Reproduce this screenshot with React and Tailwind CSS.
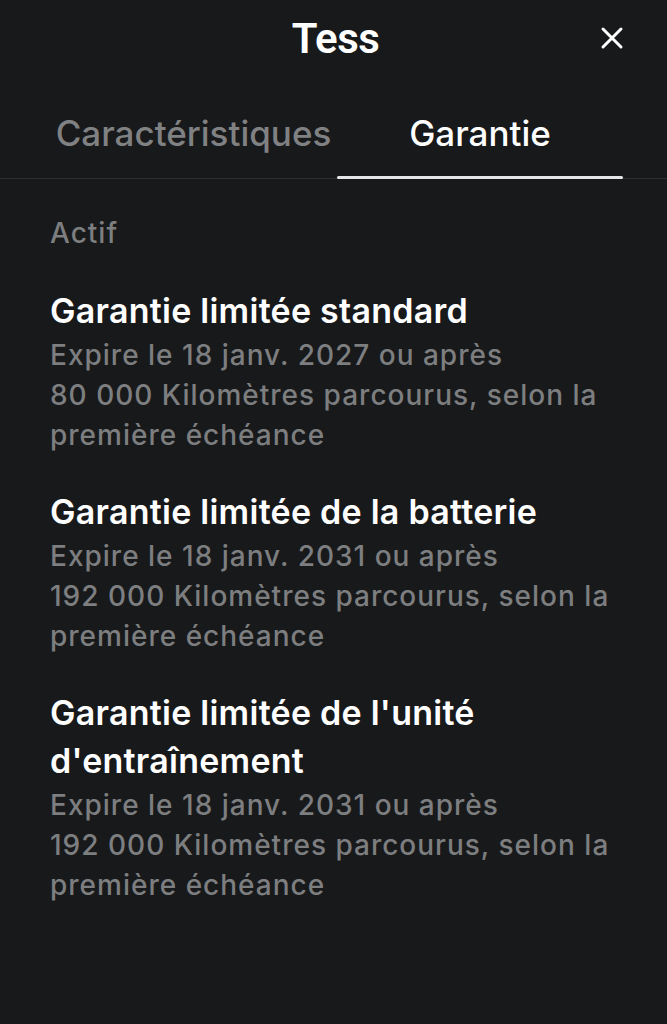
import React from "react";

const sections = [
  {
    title: ["Garantie limitée standard"],
    lines: ["Expire le 18 janv. 2027 ou après", "80 000 Kilomètres parcourus, selon la", "première échéance"],
  },
  {
    title: ["Garantie limitée de la batterie"],
    lines: ["Expire le 18 janv. 2031 ou après", "192 000 Kilomètres parcourus, selon la", "première échéance"],
  },
  {
    title: ["Garantie limitée de l'unité", "d'entraînement"],
    lines: ["Expire le 18 janv. 2031 ou après", "192 000 Kilomètres parcourus, selon la", "première échéance"],
  },
];

export default function App() {
  return (
    <div className="w-[667px] h-[1024px] bg-[#18191b] text-white overflow-hidden" style={{ fontFamily: "Inter, 'Liberation Sans', sans-serif" }}>
      <div className="relative h-[76px] flex items-center justify-center">
        <span className="text-[42px] font-semibold tracking-[-0.5px] pl-[4px]" style={{ fontFamily: "Roboto, sans-serif" }}>Tess</span>
        <svg className="absolute left-[600px] top-[26px]" width="24" height="24" viewBox="0 0 24 24" fill="none" stroke="white" strokeWidth="3" strokeLinecap="round">
          <path d="M3 3 L21 21 M21 3 L3 21" />
        </svg>
      </div>
      <div className="flex h-[103px] pt-[13px] border-b border-[#2e2f31] pl-[44px] pr-[44px]">
        <div className="w-[293px] pl-[6px] flex items-center justify-center text-[35px] font-medium text-[#808183]">Caractéristiques</div>
        <div className="w-[286px] flex items-center justify-center text-[35px] font-medium text-white relative">
          Garantie
          <div className="absolute left-0 right-0 bottom-[-1px] h-[3px] bg-[#e6e6e6] rounded-full" />
        </div>
      </div>
      <div className="px-[50px] pt-[34px]">
        <div className="text-[28px] leading-[40px] font-medium tracking-[1px] text-[#7d7e80]">Actif</div>
        <div className="flex flex-col gap-[33px] mt-[34px]">
          {sections.map((s, i) => (
            <div key={i}>
              {s.title.map((t, j) => (
                <div key={j} className="text-[34px] leading-[48px] font-semibold tracking-[0.25px] text-white">{t}</div>
              ))}
              {s.lines.map((l, j) => (
                <div key={j} className="text-[28px] leading-[40px] font-medium tracking-[1px] text-[#7d7e80] whitespace-nowrap">{l}</div>
              ))}
            </div>
          ))}
        </div>
      </div>
    </div>
  );
}
